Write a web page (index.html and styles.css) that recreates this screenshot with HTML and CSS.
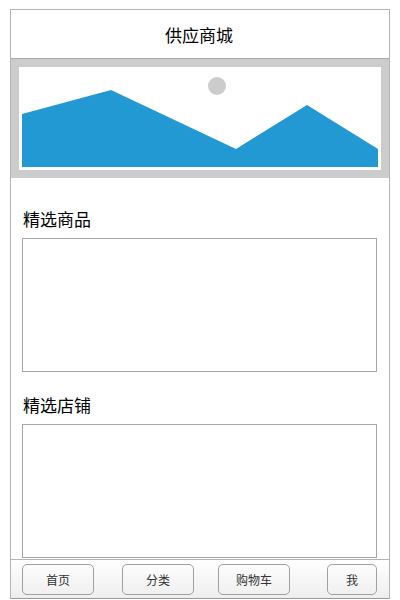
FILE: index.html
```html
<!DOCTYPE html>
<html lang="zh-CN">
<head>
<meta charset="utf-8">
<title>供应商城</title>
<link rel="stylesheet" href="styles.css">
</head>
<body>
<div class="phone">
  <header class="header">供应商城</header>
  <div class="banner">
    <svg class="banner-img" viewBox="0 0 362 103" width="362" height="103" aria-hidden="true">
      <circle cx="198" cy="19" r="9" fill="#cccccc"/>
      <polygon points="3,47 92,23 217,82 288,38 359,82 359,100 3,100" fill="#2299d2"/>
    </svg>
  </div>
  <main class="content">
    <section class="section">
      <h2 class="section-title">精选商品</h2>
      <div class="placeholder"></div>
    </section>
    <section class="section">
      <h2 class="section-title">精选店铺</h2>
      <div class="placeholder"></div>
    </section>
  </main>
  <nav class="tabbar">
    <a class="tab tab-home">首页</a>
    <a class="tab tab-cat">分类</a>
    <a class="tab tab-cart">购物车</a>
    <a class="tab tab-me">我</a>
  </nav>
</div>
</body>
</html>
```
FILE: styles.css
```css
* { box-sizing: border-box; }
html, body { margin: 0; padding: 0; height: 600px; overflow: hidden; background: #fff; }
body { font-family: "Noto Sans CJK SC", "Liberation Sans", sans-serif; color: #000; }
.phone {
  margin: 9px 10px 0;
  width: 380px;
  height: 590px;
  border: 1px solid #b4b4b4;
  border-bottom-color: #999;
  display: flex;
  flex-direction: column;
  overflow: hidden;
}
.header {
  height: 49px;
  flex: none;
  border-bottom: 1px solid #aaa;
  display: flex;
  align-items: center;
  justify-content: center;
  padding-right: 2px;
  font-size: 17px;
  font-weight: 400;
}
.banner {
  flex: none;
  height: 119px;
  border: 8px solid #ccc;
  display: flex;
  background: #fff;
}
.banner-img { display: block; flex: none; }
.content {
  flex: 1;
  min-height: 0;
  padding: 29px 11px 0;
  display: flex;
  flex-direction: column;
  gap: 21px;
}
.section-title {
  margin: 0;
  height: 31px;
  padding-left: 1px;
  font-size: 17px;
  font-weight: 400;
  line-height: 24px;
}
.placeholder {
  width: 355px;
  height: 134px;
  border: 1px solid #a6a6a6;
  background: #fff;
}
.tabbar {
  flex: none;
  height: 39px;
  border-top: 1px solid #b4b4b4;
  background: linear-gradient(#ffffff, #eeeeee);
  display: flex;
  align-items: center;
  padding: 1px 0 0 11px;
}
.tab {
  height: 31px;
  width: 72px;
  border: 1px solid #a0a0a0;
  border-radius: 5px;
  display: flex;
  align-items: center;
  justify-content: center;
  font-size: 12px;
  line-height: 12px;
  color: #333;
}
.tab-cat { margin-left: 28px; }
.tab-cart { margin-left: 24px; }
.tab-me { margin-left: 37px; width: 50px; }
```
